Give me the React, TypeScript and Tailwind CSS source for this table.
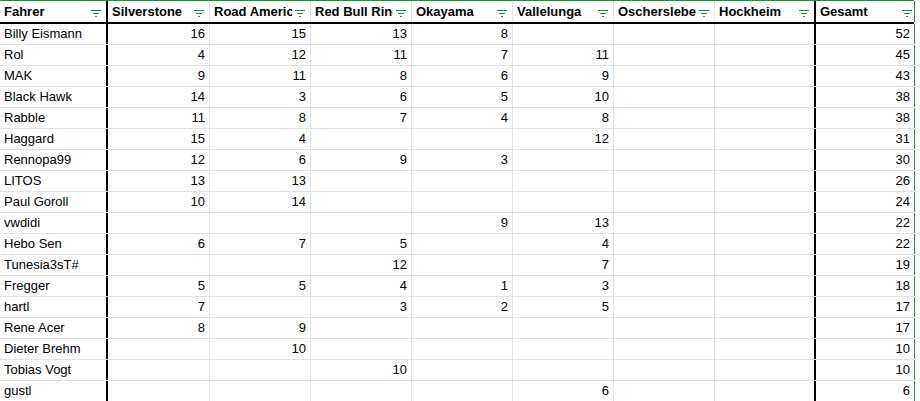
const columns = [
  { label: "Fahrer", w: "w-[108px]", edge: "border-r-2 border-black" },
  { label: "Silverstone", w: "w-[102px]", edge: "border-r border-[#e2e2e2]" },
  { label: "Road America", w: "w-[101px]", edge: "border-r border-[#e2e2e2]" },
  { label: "Red Bull Ring", w: "w-[101px]", edge: "border-r border-[#e2e2e2]" },
  { label: "Okayama", w: "w-[101px]", edge: "border-r border-[#e2e2e2]" },
  { label: "Vallelunga", w: "w-[101px]", edge: "border-r border-[#e2e2e2]" },
  { label: "Oschersleben", w: "w-[101px]", edge: "border-r border-[#e2e2e2]" },
  { label: "Hockheim", w: "w-[101px]", edge: "border-r-2 border-black" },
  { label: "Gesamt", w: "w-[99px]", edge: "border-r border-[#1e8e3e]" }
];

type Row = [string, ...(number | null)[]];

const rows: Row[] = [
  ["Billy Eismann", 16, 15, 13, 8, null, null, null, 52],
  ["Rol", 4, 12, 11, 7, 11, null, null, 45],
  ["MAK", 9, 11, 8, 6, 9, null, null, 43],
  ["Black Hawk", 14, 3, 6, 5, 10, null, null, 38],
  ["Rabble", 11, 8, 7, 4, 8, null, null, 38],
  ["Haggard", 15, 4, null, null, 12, null, null, 31],
  ["Rennopa99", 12, 6, 9, 3, null, null, null, 30],
  ["LITOS", 13, 13, null, null, null, null, null, 26],
  ["Paul Goroll", 10, 14, null, null, null, null, null, 24],
  ["vwdidi", null, null, null, 9, 13, null, null, 22],
  ["Hebo Sen", 6, 7, 5, null, 4, null, null, 22],
  ["Tunesia3sT#", null, null, 12, null, 7, null, null, 19],
  ["Fregger", 5, 5, 4, 1, 3, null, null, 18],
  ["hartl", 7, null, 3, 2, 5, null, null, 17],
  ["Rene Acer", 8, 9, null, null, null, null, null, 17],
  ["Dieter Brehm", null, 10, null, null, null, null, null, 10],
  ["Tobias Vogt", null, null, 10, null, null, null, null, 10],
  ["gustl", null, null, null, null, 6, null, null, 6]
];

function FilterIcon() {
  return (
    <svg width="10" height="7" viewBox="0 0 10 7" className="shrink-0">
      <path d="M0 0.5H10M2 3.5H8M4 6.5H6" stroke="#1e8e3e" strokeWidth="1" />
    </svg>
  );
}

export default function App() {
  return (
    <div className="w-[920px] h-[401px] overflow-hidden bg-white font-['Liberation_Sans',Arial,sans-serif] text-[13px] text-black">
      {/* HEADER */}
      <div className="flex h-[24px] w-[914px] border-t border-[#1e8e3e] border-b-2 border-b-black">
        {columns.map((col, i) => (
          <div key={col.label} className={`${col.w} ${col.edge} shrink-0 flex items-center font-bold`}>
            <span className="flex-1 min-w-0 overflow-hidden whitespace-nowrap pl-[4px]">{col.label}</span>
            <span className={i === 8 ? "mr-[2px] ml-[3px] mt-[3px]" : "mr-[5px] ml-[3px] mt-[3px]"}>
              <FilterIcon />
            </span>
          </div>
        ))}
      </div>

      {/* ROWS */}
      {rows.map(row => (
        <div key={row[0]} className="flex h-[21px] w-[914px] border-b border-[#e2e2e2]">
          {columns.map((col, i) => (
            <div
              key={col.label}
              className={`${col.w} ${col.edge} shrink-0 flex items-center overflow-hidden whitespace-nowrap ${i === 0 ? "pl-[4px]" : "justify-end pr-[4px]"}`}
            >
              {row[i] ?? ""}
            </div>
          ))}
        </div>
      ))}
    </div>
  );
}
